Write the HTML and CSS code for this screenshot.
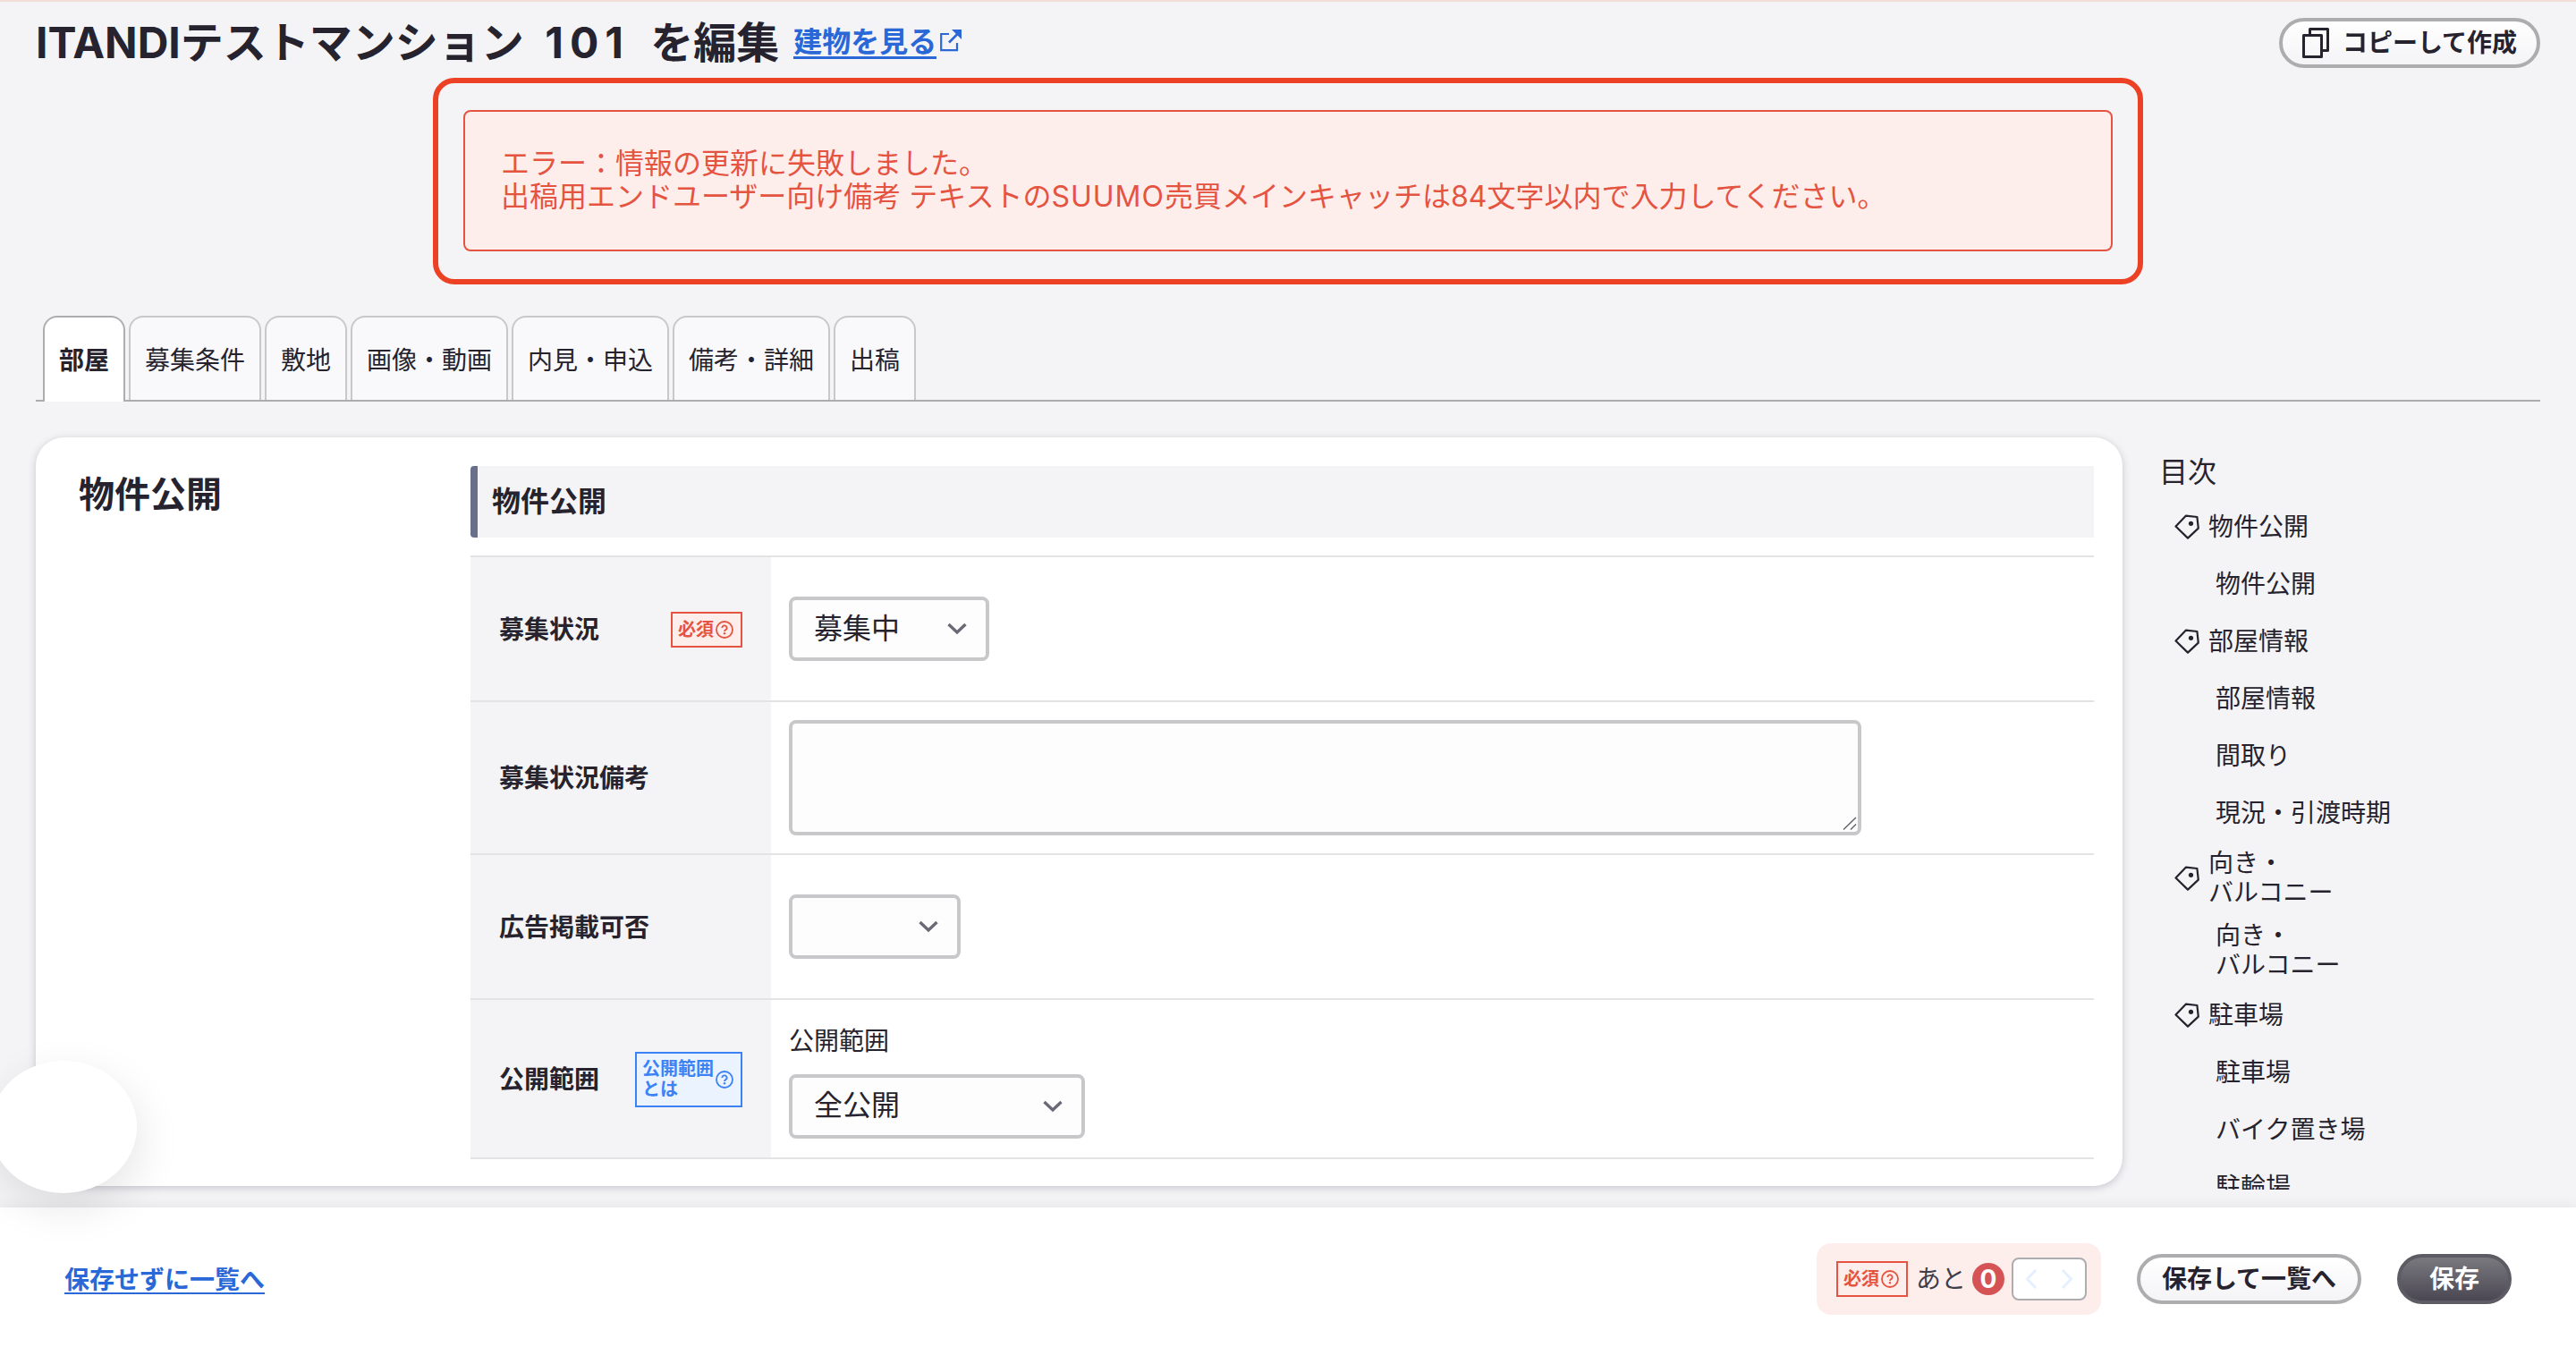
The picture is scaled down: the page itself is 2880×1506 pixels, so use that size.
FILE: index.html
```html
<!DOCTYPE html>
<html lang="ja">

<head>
    <meta charset="UTF-8" />
    <meta name="viewport" content="width=device-width, initial-scale=1.0" />
    <title>ITANDIテストマンション 101 を編集</title>
    <link rel="stylesheet" href="styles.css">
</head>

<body>
    <!-- shared icons -->
    <svg class="sprite" width="0" height="0">
        <symbol id="icon-tag" viewBox="0 0 28 28">
            <path d="M1.5 13.5 L13 1.6 L25.4 3 L26.8 15.6 L15 26.6 Z" fill="none" stroke="currentColor" stroke-width="2.2" stroke-linejoin="round" />
            <circle cx="18.5" cy="10.3" r="2.6" fill="currentColor" />
        </symbol>
        <symbol id="icon-help" viewBox="0 0 20 20">
            <circle cx="10" cy="10" r="9" fill="none" stroke="currentColor" stroke-width="1.8" />
            <path d="M7.4 8 A2.6 2.5 0 1 1 11.3 10.1 Q10 10.8 10 12" fill="none" stroke="currentColor" stroke-width="1.8" />
            <circle cx="10" cy="14.3" r="1.2" fill="currentColor" />
        </symbol>
        <symbol id="icon-chevron" viewBox="0 0 22 14">
            <path d="M1.5 2 L11 11 L20.5 2" fill="none" stroke="currentColor" stroke-width="3.4" />
        </symbol>
    </svg>

    <header class="header">
        <h1>ITANDIテストマンション<span class="room"> 101 </span>を編集</h1>
        <a class="link building-link" href="#">建物を見る</a>
        <svg class="external" width="26" height="26" viewBox="0 0 26 26">
            <path d="M11 5 H2.2 V23.2 H20 V15" fill="none" stroke="currentColor" stroke-width="2.2" />
            <path d="M11 14.5 L21 4.5" stroke="currentColor" stroke-width="2.6" />
            <path d="M14 0 H25 V11 Z" fill="currentColor" />
        </svg>
        <button class="btn copy">
            <svg width="30" height="34" viewBox="0 0 30 34">
                <path d="M8.5 7 V1.5 H28.5 V25.5 H23" fill="none" stroke="currentColor" stroke-width="3" stroke-linejoin="round" />
                <rect x="1.5" y="8.5" width="20" height="24" fill="none" stroke="currentColor" stroke-width="3" stroke-linejoin="round" />
            </svg>
            コピーして作成
        </button>
    </header>

    <div class="alert-frame">
        <div class="alert">
            <p>エラー：情報の更新に失敗しました。</p>
            <p>出稿用エンドユーザー向け備考 テキストの<span class="media">SUUMO</span>売買メインキャッチは84文字以内で入力してください。</p>
        </div>
    </div>

    <nav class="tabs">
        <a class="tab active">部屋</a>
        <a class="tab">募集条件</a>
        <a class="tab">敷地</a>
        <a class="tab">画像・動画</a>
        <a class="tab">内見・申込</a>
        <a class="tab">備考・詳細</a>
        <a class="tab">出稿</a>
    </nav>

    <main class="main">
        <section class="card">
            <h2>物件公開</h2>
            <div class="content">
                <h3>物件公開</h3>
                <div class="row row-status">
                    <div class="label">募集状況
                        <span class="badge required">必須<svg width="20" height="20"><use href="#icon-help" /></svg></span>
                    </div>
                    <div class="field">
                        <div class="select w-status">募集中<svg width="22" height="14"><use href="#icon-chevron" /></svg></div>
                    </div>
                </div>
                <div class="row row-note">
                    <div class="label">募集状況備考</div>
                    <div class="field">
                        <div class="textarea">
                            <svg width="16" height="16" viewBox="0 0 16 16">
                                <path d="M1 14.5 L15 1 M9 14.5 L15 8.5" fill="none" stroke="#66656c" stroke-width="1.5" />
                            </svg>
                        </div>
                    </div>
                </div>
                <div class="row row-ad">
                    <div class="label">広告掲載可否</div>
                    <div class="field">
                        <div class="select w-ad"><svg width="22" height="14"><use href="#icon-chevron" /></svg></div>
                    </div>
                </div>
                <div class="row row-scope">
                    <div class="label">公開範囲
                        <span class="badge info"><span>公開範囲<br>とは</span><svg width="20" height="20"><use href="#icon-help" /></svg></span>
                    </div>
                    <div class="field">
                        <div class="field-name">公開範囲</div>
                        <div class="select w-scope">全公開<svg width="22" height="14"><use href="#icon-chevron" /></svg></div>
                    </div>
                </div>
            </div>
        </section>

        <aside class="toc">
            <div class="toc-title">目次</div>
            <ul>
                <li class="group"><svg width="28" height="28"><use href="#icon-tag" /></svg>物件公開</li>
                <li>物件公開</li>
                <li class="group"><svg width="28" height="28"><use href="#icon-tag" /></svg>部屋情報</li>
                <li>部屋情報</li>
                <li>間取り</li>
                <li>現況・引渡時期</li>
                <li class="group double"><svg width="28" height="28"><use href="#icon-tag" /></svg><span>向き・<br>バルコニー</span></li>
                <li class="double"><span>向き・<br>バルコニー</span></li>
                <li class="group"><svg width="28" height="28"><use href="#icon-tag" /></svg>駐車場</li>
                <li>駐車場</li>
                <li>バイク置き場</li>
                <li>駐輪場</li>
            </ul>
        </aside>
    </main>

    <footer class="footer">
        <a class="link" href="#">保存せずに一覧へ</a>
        <div class="remaining">
            <span class="badge required">必須<svg width="20" height="20"><use href="#icon-help" /></svg></span>
            <span class="remaining-text">あと</span>
            <span class="count">0</span>
            <span class="pager">
                <svg width="54" height="22" viewBox="0 0 54 22">
                    <path d="M12 1 L2.5 11 L12 21 M42 1 L51.5 11 L42 21" fill="none" stroke="currentColor" stroke-width="3" />
                </svg>
            </span>
        </div>
        <button class="btn save-list">保存して一覧へ</button>
        <button class="btn primary">保存</button>
    </footer>

    <div class="bubble"></div>
</body>

</html>
```

FILE: styles.css
```css
* {
    box-sizing: border-box;
}

body {
    margin: 0;
    height: 1506px;
    overflow: hidden;
    display: flex;
    flex-direction: column;
    position: relative;
    border-top: 2px solid #f3ddd6;
    background: #f4f4f6;
    color: #26232e;
    font-family: Inter, "Noto Sans CJK JP", sans-serif;
    font-size: 28px;
    line-height: 1.15;
}

h1,
h2,
h3,
p,
ul {
    margin: 0;
    padding: 0;
}

.sprite {
    position: absolute;
}

.link {
    color: #2a68d8;
    font-weight: bold;
    text-decoration: none;
    border-bottom: 2px solid #2a68d8;
    line-height: 1;
}

/* header */
.header {
    display: flex;
    align-items: center;
    height: 85px;
    padding: 7px 40px 0;
}

h1 {
    font-size: 48px;
    white-space: pre;
}

.room {
    letter-spacing: 7px;
    word-spacing: 5px;
}

.building-link {
    margin-left: 16px;
    font-size: 32px;
    border-bottom-width: 3px;
}

.external {
    margin-left: 3px;
    margin-bottom: 5px;
    color: #2a68d8;
}

.btn {
    display: flex;
    align-items: center;
    justify-content: center;
    height: 56px;
    padding: 0;
    border: 4px solid #adadb0;
    border-radius: 28px;
    background: linear-gradient(#fff, #f4f4f7);
    color: #26232e;
    font: bold 28px/1 Inter, "Noto Sans CJK JP", sans-serif;
    cursor: pointer;
}

.copy {
    width: 292px;
    margin-left: auto;
    gap: 15px;
}

/* error message */
.alert-frame {
    width: 1912px;
    height: 231px;
    margin-left: 484px;
    padding: 30px 28px;
    flex: none;
    border: 6px solid #ec4125;
    border-radius: 24px;
}

.alert {
    height: 158px;
    padding: 39px 40px;
    border: 2px solid #e55441;
    border-radius: 8px;
    background: #fdeeec;
    color: #e55441;
    font-size: 32px;
}

.alert p {
    height: 37px;
    line-height: 37px;
    white-space: nowrap;
}

.media {
    letter-spacing: 1px;
}

/* tabs */
.tabs {
    display: flex;
    flex: none;
    gap: 4px;
    height: 96px;
    margin: 35px 40px 0;
    padding-left: 8px;
    border-bottom: 2px solid #adadb0;
}

.tab {
    display: flex;
    align-items: center;
    height: 94px;
    padding: 4px 16px 0;
    border: 2px solid #c8c8cb;
    border-bottom: 0;
    border-radius: 16px 16px 0 0;
    background: #f9f9fb;
}

.tab.active {
    height: 96px;
    padding-bottom: 2px;
    border-color: #adadb0;
    background: #fff;
    font-weight: bold;
}

/* edit form */
.main {
    display: flex;
    flex: 1;
    min-height: 0;
    padding: 40px 40px 0;
}

.card {
    display: flex;
    width: 2333px;
    height: 837px;
    padding: 32px;
    border-radius: 32px;
    background: #fff;
    box-shadow: 0 2px 8px rgba(60, 60, 90, 0.25);
}

h2 {
    width: 454px;
    padding: 9px 16px;
    font-size: 40px;
}

.content {
    width: 1815px;
}

h3 {
    display: flex;
    align-items: center;
    height: 80px;
    margin-bottom: 20px;
    padding: 1px 0 0 16px;
    border-left: 8px solid #676f8c;
    border-radius: 4px 0 0 4px;
    background: #f4f4f6;
    font-size: 32px;
}

.row {
    display: flex;
    border-top: 2px solid #e3e3e5;
}

.row-status {
    height: 162px;
}

.row-note {
    height: 171px;
}

.row-ad {
    height: 162px;
}

.row-scope {
    height: 180px;
    border-bottom: 2px solid #e3e3e5;
}

.label {
    display: flex;
    align-items: center;
    justify-content: space-between;
    width: 336px;
    padding: 2px 32px 0;
    background: #f4f4f6;
    font-weight: bold;
}

.badge {
    display: flex;
    align-items: center;
    gap: 2px;
    padding: 0 8px 0 6px;
    border: 2px solid;
    font-size: 20px;
    font-weight: bold;
    line-height: 23px;
}

.required {
    width: 80px;
    height: 40px;
    border-color: #e55441;
    background: #fdeeec;
    color: #e55441;
}

.info {
    width: 120px;
    height: 62px;
    border-color: #3b82f6;
    background: #ebf3ff;
    color: #3b82f6;
}

.field {
    display: flex;
    flex-direction: column;
    justify-content: center;
    padding-left: 20px;
}

.field-name {
    height: 40px;
    margin-bottom: 17px;
    line-height: 40px;
}

.row-scope .field {
    padding-top: 4px;
}

.select {
    display: flex;
    align-items: center;
    height: 72px;
    padding: 0 21px 0 24px;
    border: 4px solid #c8c8ca;
    border-radius: 8px;
    background: #fdfdfe;
    font-size: 32px;
}

.select svg {
    margin-left: auto;
    color: #6b6975;
}

.w-status {
    width: 224px;
}

.w-ad {
    width: 192px;
}

.w-scope {
    width: 331px;
}

.textarea {
    display: flex;
    align-items: flex-end;
    justify-content: flex-end;
    width: 1199px;
    height: 129px;
    padding: 1px;
    border: 4px solid #c8c8ca;
    border-radius: 8px;
    background: #fdfdfe;
}

/* table of contents */
.toc {
    height: 841px;
    margin-left: 41px;
    padding-top: 20px;
    overflow: hidden;
}

.toc-title {
    height: 48px;
    font-size: 32px;
    line-height: 37px;
}

.toc ul {
    list-style: none;
}

.toc li {
    display: flex;
    align-items: center;
    height: 64px;
    padding-left: 63px;
}

.toc .double {
    height: 81px;
}

.toc .group {
    gap: 10px;
    padding-left: 17px;
}

/* bottom bar */
.footer {
    display: flex;
    flex: none;
    align-items: center;
    height: 156px;
    padding: 4px 72px 0;
    background: #fff;
    box-shadow: 0 0 16px rgba(0, 0, 0, 0.08);
}

.footer .link {
    margin-top: 3px;
}

.remaining {
    display: flex;
    align-items: center;
    width: 318px;
    height: 80px;
    margin-left: auto;
    padding-left: 22px;
    border-radius: 16px;
    background: #fdeeec;
}

.remaining-text {
    margin-left: 9px;
    color: #403e4a;
}

.count {
    display: flex;
    align-items: center;
    justify-content: center;
    width: 36px;
    height: 36px;
    margin-left: 7px;
    border-radius: 50%;
    background: #d65355;
    color: #fff;
    font-weight: bold;
}

.pager {
    display: flex;
    align-items: center;
    justify-content: center;
    width: 84px;
    height: 48px;
    margin-left: 8px;
    border: 2px solid #adadb0;
    border-radius: 8px;
    background: #fff;
    color: #e4f0ff;
}

.save-list {
    width: 251px;
    margin-left: 40px;
}

.primary {
    width: 128px;
    margin-left: 40px;
    border-color: #5d5b64;
    background: linear-gradient(#7a797f, #4a4752);
    color: #fff;
}

/* floating chat bubble */
.bubble {
    position: absolute;
    left: -11px;
    top: 1184px;
    width: 164px;
    height: 148px;
    border-radius: 50%;
    background: #fff;
    box-shadow: 4px 16px 48px rgba(0, 0, 0, 0.1);
}
```
